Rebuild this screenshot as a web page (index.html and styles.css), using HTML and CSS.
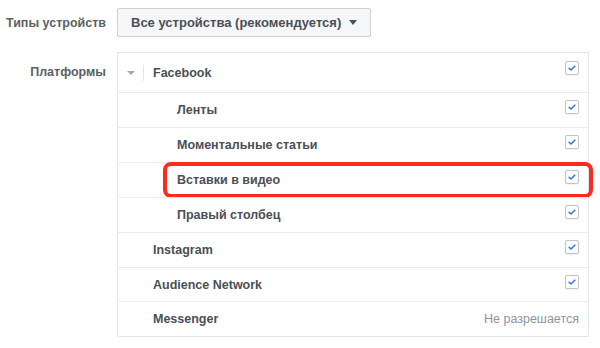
FILE: index.html
```html
<!DOCTYPE html>
<html lang="ru">
<head>
  <meta charset="UTF-8" />
  <meta name="viewport" content="width=device-width, initial-scale=1.0"/>
  <title>Плейсменты</title>
  <link rel="stylesheet" href="styles.css">
</head>
<body>
  <div class="form">
    <div class="field field-devices">
      <div class="label">Типы устройств</div>
      <button class="select">
        Все устройства (рекомендуется)
        <span class="caret"></span>
      </button>
    </div>

    <div class="field">
      <div class="label label-platforms">Платформы</div>
      <div class="platforms">
        <div class="row row-group">
          <span class="toggle"></span>
          <span class="divider"></span>
          <span class="name">Facebook</span>
          <span class="check"></span>
        </div>
        <div class="row row-sub">
          <span class="name">Ленты</span>
          <span class="check"></span>
        </div>
        <div class="row row-sub">
          <span class="name">Моментальные статьи</span>
          <span class="check"></span>
        </div>
        <div class="row row-sub is-marked">
          <span class="name">Вставки в видео</span>
          <span class="check"></span>
          <span class="marker"></span>
        </div>
        <div class="row row-sub">
          <span class="name">Правый столбец</span>
          <span class="check"></span>
        </div>
        <div class="row row-top">
          <span class="name">Instagram</span>
          <span class="check"></span>
        </div>
        <div class="row row-top">
          <span class="name">Audience Network</span>
          <span class="check"></span>
        </div>
        <div class="row row-top">
          <span class="name">Messenger</span>
          <span class="note">Не разрешается</span>
        </div>
      </div>
    </div>
  </div>
</body>
</html>
```

FILE: styles.css
```css
* {
  box-sizing: border-box;
  margin: 0;
  padding: 0;
}
body {
  font-family: "Liberation Sans", Arial, Helvetica, sans-serif;
  font-size: 12.5px;
  background-color: #fff;
  color: #4b4f56;
}
.form {
  padding: 8px 0 0 0;
}
.field {
  display: grid;
  grid-template-columns: 106px 472px;
  column-gap: 11px;
}
.field-devices {
  margin-bottom: 15px;
  align-items: center;
}
.label {
  text-align: right;
  font-weight: bold;
  color: #5b5f66;
}
.label-platforms {
  padding-top: 13px;
}
.select {
  justify-self: start;
  display: flex;
  align-items: center;
  height: 29px;
  padding: 0 13px 0 13px;
  background-color: #f5f6f7;
  border: 1px solid #ccd0d5;
  border-radius: 2px;
  font: inherit;
  font-size: 13px;
  font-weight: bold;
  color: #4b4f56;
}
.caret {
  margin-left: 8px;
  width: 0;
  height: 0;
  border-left: 4.5px solid transparent;
  border-right: 4.5px solid transparent;
  border-top: 5px solid #4b4f56;
}
.platforms {
  border: 1px solid #e3e5e8;
}
.row {
  position: relative;
  display: flex;
  align-items: center;
  height: 35px;
  padding-right: 9px;
  border-top: 1px solid #e9ebee;
}
.row:first-child {
  border-top: none;
  height: 39px;
}
.row-top {
  height: 34.7px;
}
.row-group {
  padding-left: 9px;
}
.row-sub {
  padding-left: 59px;
}
.row-top {
  padding-left: 35px;
}
.name {
  flex: 1;
  font-weight: bold;
  color: #4b4f56;
}
.toggle {
  width: 0;
  height: 0;
  border-left: 4px solid transparent;
  border-right: 4px solid transparent;
  border-top: 4px solid #a4a8ae;
  margin-right: 8px;
}
.divider {
  width: 1px;
  height: 16px;
  background-color: #e3e5e8;
  margin-right: 9px;
}
.check {
  align-self: flex-start;
  margin-top: 7px;
  width: 14px;
  height: 14px;
  border: 1px solid #bec3c9;
  border-radius: 2px;
  background-color: #fff;
  box-shadow: 0 1px 1px rgba(0,0,0,0.05);
  background-image: url("data:image/svg+xml,%3Csvg xmlns='http://www.w3.org/2000/svg' viewBox='0 0 12 12'%3E%3Cpath d='M3.2 6.4 L5 8 L8.8 4.2' fill='none' stroke='%233578e5' stroke-width='1.6' stroke-linecap='round' stroke-linejoin='round'/%3E%3C/svg%3E");
  background-size: 12px 12px;
  background-repeat: no-repeat;
}
.row-group .check {
  margin-top: 8px;
}
.note {
  color: #90949c;
}
.marker {
  position: absolute;
  left: 45px;
  right: -5px;
  top: -1px;
  bottom: -1px;
  border: 4px solid #fc2b1f;
  border-radius: 8px;
  pointer-events: none;
}
```
